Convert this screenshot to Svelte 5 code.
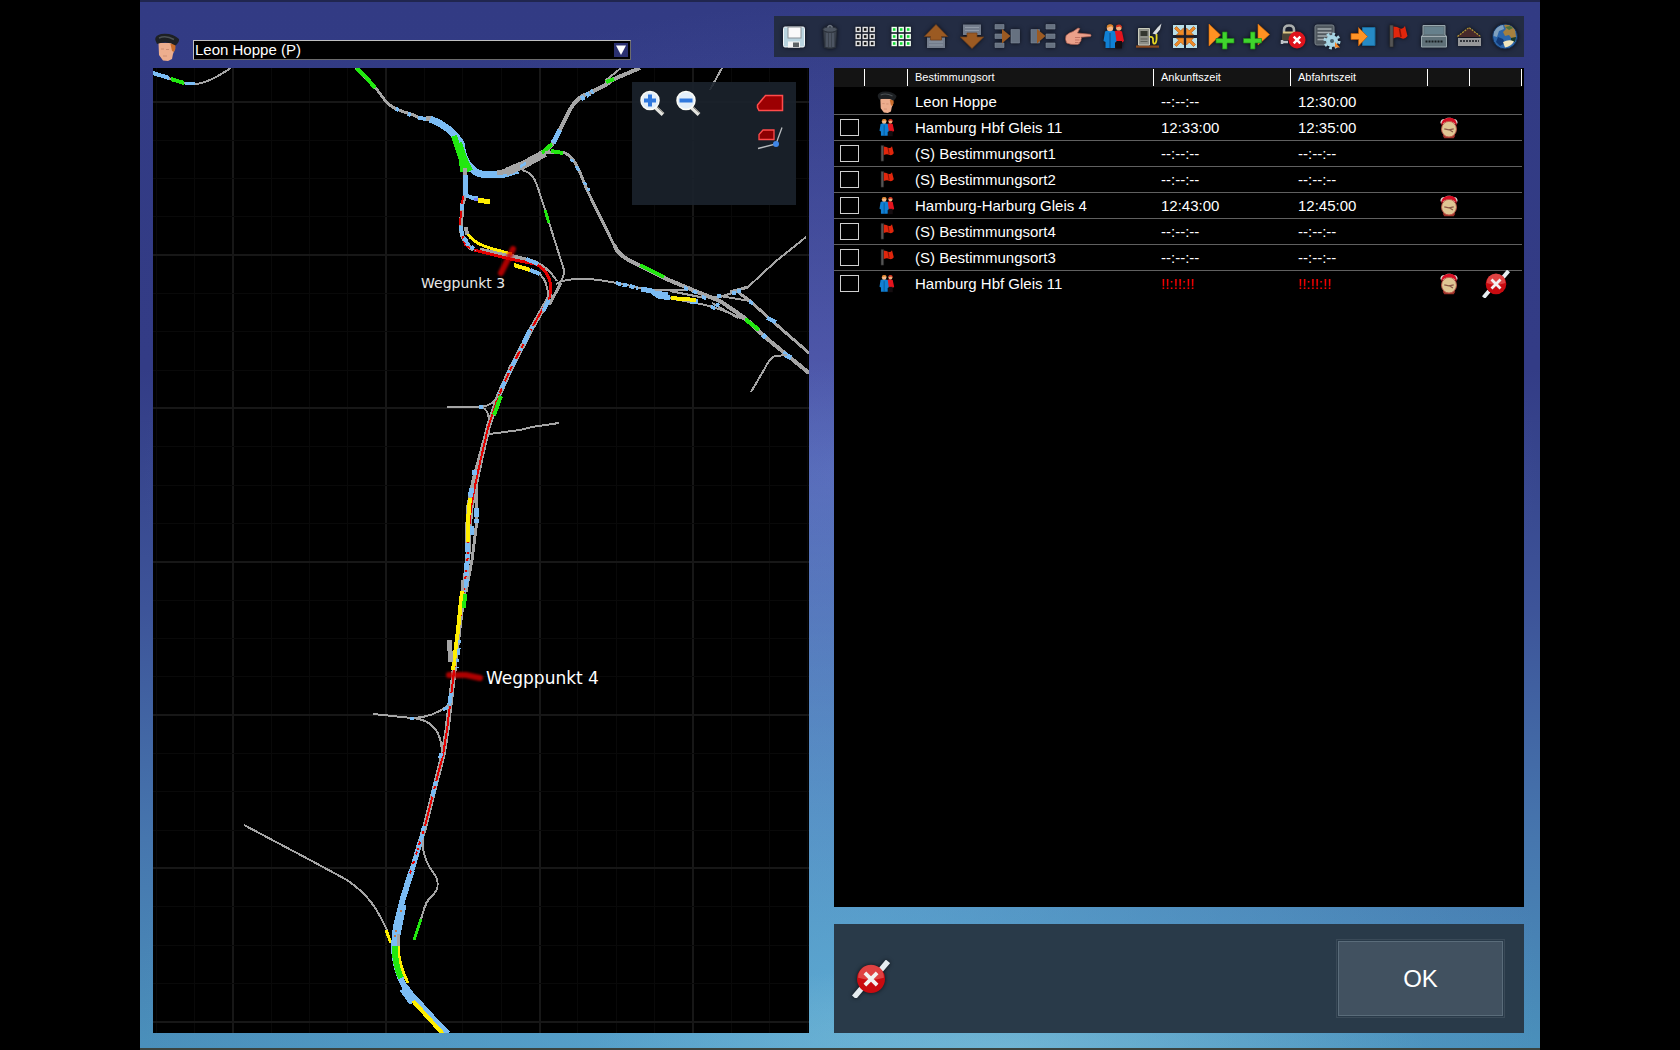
<script>
    const drivers = ['Leon Hoppe (P)'];
    let driver = $state(drivers[0]);

    const tools = [
        { icon: 'save', label: 'Speichern' },
        { icon: 'trash', label: 'Löschen' },
        { icon: 'grid', label: 'Alle abwählen' },
        { icon: 'gridOn', label: 'Alle auswählen' },
        { icon: 'up', label: 'Nach oben' },
        { icon: 'down', label: 'Nach unten' },
        { icon: 'merge', label: 'Verbinden' },
        { icon: 'split', label: 'Teilen' },
        { icon: 'hand', label: 'Zeigen' },
        { icon: 'people', label: 'Fahrgäste' },
        { icon: 'fuel', label: 'Tanken' },
        { icon: 'couple', label: 'Kuppeln' },
        { icon: 'addAfter', label: 'Danach einfügen' },
        { icon: 'addBefore', label: 'Davor einfügen' },
        { icon: 'unlock', label: 'Sperre aufheben' },
        { icon: 'orders', label: 'Anweisungen' },
        { icon: 'goto', label: 'Gehe zu' },
        { icon: 'flag', label: 'Wegpunkt' },
        { icon: 'platform', label: 'Bahnsteig' },
        { icon: 'station', label: 'Bahnhof' },
        { icon: 'globe', label: 'Welt' }
    ];

    const none = '--:--:--';
    let rows = $state([
        { icon: 'driver', name: 'Leon Hoppe', an: none, ab: '12:30:00', start: true },
        { icon: 'people', name: 'Hamburg Hbf Gleis 11', an: '12:33:00', ab: '12:35:00', clock: true },
        { icon: 'flag', name: '(S) Bestimmungsort1', an: none, ab: none },
        { icon: 'flag', name: '(S) Bestimmungsort2', an: none, ab: none },
        { icon: 'people', name: 'Hamburg-Harburg Gleis 4', an: '12:43:00', ab: '12:45:00', clock: true },
        { icon: 'flag', name: '(S) Bestimmungsort4', an: none, ab: none },
        { icon: 'flag', name: '(S) Bestimmungsort3', an: none, ab: none },
        { icon: 'people', name: 'Hamburg Hbf Gleis 11', an: '!!:!!:!!', ab: '!!:!!:!!', clock: true, broken: true }
    ]);

    const grey = '#a5a5a5';
    const blue = '#7bbcf4';
    const green = '#22e810';
    const yellow = '#ffee00';
    const red = '#e40000';

    // main line between the two junctions
    const mainLine = 'M549 298L533 326L511 368L498 397L488 428L481 458L475 486L471 508L469 530L468 555L465 582L461 612L457 645L453 680L450 705L447 730L443 755L436 782L425 826L412 870';
    const mainEnd = 'M412 870L403 898L396 926L394 945C394 965 400 982 412 998L432 1018L447 1034';

    const tracks = [
        // north west
        ['M153 73L171 79L184 83C198 86 208 83 231 68', grey, 2],
        ['M153 73L169 78', blue, 4],
        ['M171 79L184 83', green, 4],
        ['M185 83L195 84', blue, 3],
        ['M356 68L375 87L387 103Q395 110 411 114L420 118L440 121', grey, 3],
        ['M356 68L366 77L375 88', green, 4],
        ['M396 109L399 110M408 114L411 115M418 118L428 119', blue, 4],
        ['M426 118C442 120 455 132 461 142', grey, 5],
        ['M430 119C444 124 454 132 461 143C463 160 470 175 489 175L505 174L518 170', blue, 7],
        ['M497 173L508 171M520 168L526 165', grey, 5],
        ['M506 172L525 164L545 153', grey, 8],
        ['M520 167L526 163', blue, 3],
        ['M454 136L462 160L463 172M459 143L464 158L470 171', green, 6],
        // north east
        ['M545 153L553 143L561 128C571 105 577 98 585 95L604 86L614 79L640 68', grey, 4],
        ['M605 81L621 68', grey, 2],
        ['M553 143L560 130', blue, 5],
        ['M581 99L593 91', blue, 5, '4 2'],
        ['M606 82L614 79', green, 4],
        ['M542 153L552 144', green, 4],
        ['M545 152L563 152C578 158 581 178 588 192L614 245C620 258 630 260 640 266L664 278L700 293L720 301L745 318L765 337L809 373', grey, 3],
        ['M614 245C620 258 630 260 640 266L664 278L700 293L720 301L745 318L765 337L809 373', grey, 4],
        ['M551 151L563 153', green, 4],
        ['M571 159L573 162M576 166L579 171M584 182L586 185M588 188L589 191', blue, 3],
        ['M640 265L664 277', green, 4],
        ['M745 319L759 330', green, 4],
        ['M763 335L766 338M783 353L791 358', blue, 5],
        ['M522 170C533 173 535 180 538 188L546 213L564 270Q564 278 560 282', grey, 2],
        ['M545 210L549 223', green, 3],
        ['M722 68L710 90', grey, 2],
        // east yard
        ['M556 284L562 281C580 277 595 279 617 283L650 290L668 298L690 302C712 305 728 312 745 320', grey, 2],
        ['M650 290L685 290L690 288M670 291L700 297L720 297L738 291M712 303L738 318M720 296L750 301', grey, 2],
        ['M748 287L775 262L806 237', grey, 2],
        ['M730 292L748 287M738 292L750 301L770 319L809 353', grey, 3],
        ['M787 355L775 356Q770 358 765 368L751 392', grey, 2],
        ['M616 283L638 288', blue, 4, '5 2'],
        ['M641 289L652 291L658 296L670 298M655 293L668 295M690 302L698 301', blue, 5],
        ['M671 298L696 300', yellow, 4],
        ['M684 288L688 289M693 291L697 293M702 297L706 298M711 307L715 308M716 304L719 306M717 296L721 296M732 293L736 293M737 291L741 291M749 302L753 303M767 318L776 322', blue, 4],
        // south of the green junction
        ['M465 168L465 196L462 205L461 230Q462 242 473 250', grey, 4],
        ['M465 175L465 195', blue, 5],
        ['M463 196L462 204M461 211L460 225M462 232L465 245L470 248', red, 2],
        ['M462 204L462 210M461 226L462 236M464 238L467 242', blue, 4],
        ['M465 195L473 198L478 198', blue, 4],
        ['M474 199L479 200', '#6f7cf4', 3],
        ['M478 200L490 202', yellow, 5],
        ['M466 227L467 235', grey, 4],
        ['M468 234C474 245 492 249 512 254', yellow, 3],
        ['M480 249L510 256L535 262C549 270 553 284 550 298', grey, 3],
        ['M474 250L510 259L535 264C548 269 554 284 549 298', red, 3],
        ['M466 243L476 250', blue, 4, '4 2'],
        ['M512 255L528 259Q545 263 557 281', grey, 2],
        ['M526 259L538 264', blue, 4],
        ['M514 265L530 270', yellow, 4],
        ['M530 270L540 274', blue, 4],
        ['M540 274Q548 282 548 297', grey, 2],
        ['M561 283L549 305', grey, 3],
        // main line
        [mainLine, grey, 5],
        ['M484 440L473 480L468 505L466 540L468 560M476 480L477 520L472 560L466 592', grey, 3],
        [mainLine, red, 2],
        ['M533 326L511 368L499 394', blue, 4, '3 9 8 5'],
        ['M549 300L543 311M530 330L523 343', blue, 4],
        ['M475 470L474 475M472 488L470 497M476 508L476 526M472 526L471 535M467 543L467 563L466 582L463 592', blue, 5, '9 2 4 3'],
        ['M501 396L494 415', green, 4],
        ['M470 498L468 520L468 542', yellow, 4],
        ['M462 580L462 592', grey, 3],
        ['M462 591L458 630L453 670', yellow, 4],
        ['M465 594L464 608', green, 4],
        ['M449 640L451 662', grey, 5],
        ['M460 640L457 668', blue, 3, '3 5 7 4'],
        ['M451 693L449 706', blue, 4],
        ['M441 753L440 759M436 781L432 798M424 826L421 840L413 868', blue, 4, '5 3 8 2'],
        ['M420 842L412 870', blue, 5, '5 3'],
        // sidings
        ['M447 407L481 407Q492 406 498 396M481 407Q488 409 489 419', grey, 2],
        ['M479 407L483 407', blue, 4],
        ['M489 434L520 430L532 427L559 423', grey, 2],
        ['M373 714L412 718Q432 718 449 705M412 718Q441 720 442 752', grey, 2],
        ['M410 718L414 718M443 710L448 707', blue, 3],
        ['M423 840C422 858 430 868 435 875C440 884 438 890 432 896C424 902 424 912 421 919', grey, 2],
        ['M421 919L414 940', green, 3],
        ['M244 825L310 860L347 880C367 894 376 906 387 930', grey, 2],
        ['M386 930L391 943', yellow, 3],
        // south end
        [mainEnd, blue, 6],
        ['M403 905L396 940', blue, 7],
        ['M404 988L414 1002', blue, 10],
        ['M412 996L432 1018L448 1034', blue, 7],
        ['M398 934L398 948', grey, 3],
        ['M398 946Q399 966 408 983', yellow, 3],
        ['M395 946Q394 962 401 978', green, 6],
        ['M420 842L408 880', red, 2, '3 7'],
        ['M401 910L400 914M396 930L395 937', '#c07848', 2, '2 3'],
        ['M413 1001L443 1034', yellow, 4]
    ];

    // fine grid has four cells between two bright lines
    const step = 38.33;
    const gridX = Array.from({ length: 18 }, (_, i) => ({ at: 156.3 + i * step, strong: i % 4 === 2 }));
    const gridY = Array.from({ length: 25 }, (_, i) => ({ at: 101.8 + i * step, strong: i % 4 === 0 }));
</script>

{#snippet icon(name, size = 28)}
    <svg class="icon" width={size} height={size} viewBox="0 0 28 28" aria-hidden="true">
        {#if name === 'save'}
            <rect x="3.5" y="4" width="21" height="20" rx="1.5" fill="#b9d4df" stroke="#f2f6f8" />
            <rect x="8" y="4" width="13" height="11" fill="#fafafa" stroke="#8b9298" />
            <rect x="8" y="18.5" width="12" height="6" fill="#f4f4f4" />
            <rect x="13" y="19.5" width="6" height="4.5" fill="#5d6265" />
        {:else if name === 'trash'}
            <path d="M7.5 8h13l-1 16.5q-5 2-11 0z" fill="#3c434e" stroke="#2a303a" />
            <path d="M11 10v14M14 10v14M17 10v14" stroke="#596270" stroke-width="1.2" />
            <ellipse cx="14" cy="6.5" rx="7" ry="2.7" fill="#4d5561" stroke="#2b313b" />
            <path d="M11.5 4.5q2.5-4 5 0" fill="none" stroke="#6a727e" stroke-width="1.5" />
        {:else if name === 'grid' || name === 'gridOn'}
            {#each [5, 12, 19] as y}
                {#each [5, 12, 19] as x}
                    <rect x={x + 0.2} y={y - 0.5} width="4" height="4" fill={name === 'grid' ? '#111' : '#10d832'} stroke={name === 'grid' ? '#e4e4e4' : '#f4fff4'} stroke-width="1.4" />
                {/each}
            {/each}
        {:else if name === 'up'}
            <path d="M5 14.5h18V25H5z" fill="#737c8b" />
            <path d="M7 19h14M7 22h14" stroke="#9099a6" />
            <path d="M14 1.5L25.7 13.5H19.5V17H8.5V13.5H2.3z" fill="#9b5a22" stroke="#71401b" stroke-width="0.7" />
        {:else if name === 'down'}
            <path d="M5 1.5h18V12H5z" fill="#737c8b" />
            <path d="M7 4.5h14M7 7.5h14" stroke="#9099a6" />
            <path d="M9 10h10v4h6.7L14 25.5 2.3 14H9z" fill="#9b5a22" stroke="#71401b" stroke-width="0.7" />
        {:else if name === 'merge'}
            <path d="M2 1.5h9V6H2zM2 11h9v4.5H2zM2 20h9v4.5H2zM18 6.5h8.5V20H18z" fill="#667180" stroke="#7f8a99" stroke-width="0.6" />
            <path d="M9 6l8.5 7L9 20.5z" fill="#9b5a22" />
        {:else if name === 'split'}
            <path d="M17 1.5h9V6h-9zM17 11h9v4.5h-9zM17 20h9v4.5h-9zM2 6.5h8.5V20H2z" fill="#667180" stroke="#7f8a99" stroke-width="0.6" />
            <path d="M8 6l8.5 7L8 20.5z" fill="#9b5a22" />
        {:else if name === 'hand'}
            <path d="M2 12.5q3-3 7-4l5-3.500 1.800.6-2.300 4.400 13 1.300q1.200 1.200 0 2.200l-9.500.8q1.200 1 0 2.400.6 1.600-1.200 2.400.3 1.900-2.200 2.300-6.600.6-11-1.400-2-3.500-.6-7.500z" fill="#eba08a" stroke="#a55c50" stroke-width="0.7" />
            <path d="M11 14.5h5M11 17h4.5M11 19.5h3.5" stroke="#b9675a" stroke-width="0.8" />
        {:else if name === 'people'}
            <path d="M14 8.5q4-2 8 0l2 9.500-2 1.500h-8z" fill="#e5141e" />
            <path d="M15.5 18H22v7.5h-6.5z" fill="#150d10" />
            <circle cx="18.8" cy="4.8" r="2.8" fill="#f0ad7c" />
            <path d="M15.8 4.5q0-3 3.2-3 3.4.3 2.8 4l-1.8-2z" fill="#d3341f" />
            <path d="M5 8.5q5-2.500 10 0l1.500 10-1.500 1V25H5.500v-6L3.500 18z" fill="#1080d4" />
            <path d="M10 10v15" stroke="#084a86" />
            <circle cx="10" cy="5" r="3.2" fill="#f4b98a" />
            <path d="M6.8 5q-.3-3.700 3.400-3.700T13.300 5l-2-1.800z" fill="#d9822b" />
        {:else if name === 'fuel'}
            <path d="M1 22.5h23v2.200H1z" fill="#8a4a1e" />
            <path d="M3.5 5.5h11V22h-11z" fill="#8e9088" stroke="#c9cbbd" />
            <path d="M5.5 8h7v5h-7z" fill="#33372f" />
            <path d="M5.5 16h7M5.5 18.5h7" stroke="#5c5f58" />
            <path d="M14.5 14q4-1 3.500 3.500 0 4.500 2.500 2.500 1.500-1.500 1-9" fill="none" stroke="#e4d422" stroke-width="1.8" />
            <path d="M17.5 10.5l5-6 4-4-1.500 6-4 5z" fill="#d9dde0" />
        {:else if name === 'couple'}
            <path d="M2 2h11v10H2zM15 2h11v10H15zM2 15h11v10H2zM15 15h11v10H15z" fill="#b8dfe8" />
            <g fill="#f08a24" stroke="#a9510f" stroke-width="0.6">
                <path d="M12.5 12h-7l2.300-2.300L3.500 5.500l2-2 4.200 4.300L12.500 5z" />
                <path d="M15.5 12h7l-2.300-2.300 4.300-4.200-2-2-4.200 4.300L15.500 5z" />
                <path d="M12.5 15h-7l2.300 2.300-4.300 4.200 2 2 4.200-4.300 2.800 2.800z" />
                <path d="M15.5 15h7l-2.300 2.300 4.300 4.200-2 2-4.200-4.300-2.800 2.800z" />
            </g>
        {:else if name === 'addAfter'}
            <path d="M2 1v22l11.500-11z" fill="#ff9222" stroke="#d86c08" stroke-width="0.6" />
            <path d="M15.5 9H20v6.500h7V20h-7v6h-4.500v-6H9v-4.500h6.500z" fill="#3fd42d" stroke="#1f8c19" stroke-width="0.7" />
        {:else if name === 'addBefore'}
            <path d="M16 1v21l11.500-10.500z" fill="#ff9222" stroke="#d86c08" stroke-width="0.6" />
            <path d="M8.5 9H13v6.500h6.500V20H13v6H8.500v-6h-7v-4.500h7z" fill="#3fd42d" stroke="#1f8c19" stroke-width="0.7" />
        {:else if name === 'unlock'}
            <path d="M6 11V7q0-4.500 5-4.500T16 7v4" fill="none" stroke="#a9adad" stroke-width="2.6" />
            <path d="M4 10h14v7H4z" fill="#4a4437" />
            <path d="M5 9.5h12" stroke="#d9c583" stroke-width="2" />
            <path d="M3 19h7M4 17v4" stroke="#bcc2c6" stroke-width="2.5" />
            <circle cx="19" cy="17" r="8.5" fill="#e0141c" />
            <path d="M15.7 13.7l6.600 6.600M22.300 13.700l-6.600 6.600" stroke="#fff" stroke-width="2.5" />
        {:else if name === 'orders'}
            <rect x="2" y="2" width="19" height="20" rx="2" fill="#50585f" stroke="#79828a" />
            <path d="M4.5 6h14M4.500 9.500h14M4.500 13h14M4.500 16.500h14" stroke="#a3aaaf" stroke-width="1.3" />
            <circle cx="19" cy="18" r="6" fill="#a7d5e4" />
            <circle cx="19" cy="18" r="7" fill="none" stroke="#a7d5e4" stroke-width="3" stroke-dasharray="2.7 2.8" />
            <circle cx="19" cy="18" r="2" fill="#46616d" />
            <path d="M22 19l5 5.5h-5z" fill="#f58423" />
        {:else if name === 'goto'}
            <path d="M13.5 4.5H26v18H13.500z" fill="#268ac4" stroke="#196a9c" />
            <path d="M2 10.5h7.500v-6l9 9-9 9.500v-6.500H2z" fill="#ff9426" stroke="#b9590c" stroke-width="0.7" />
        {:else if name === 'flag'}
            <path d="M5.7 2h3.600v22H5.700z" fill="#555" stroke="#262626" stroke-width="0.6" />
            <path d="M9.5 3.5q4 .2 6.500 2 3 1 5-2.500l2.500 10q-3 4-6.500 2-3.500-1.500-7.500.5z" fill="#e0260c" />
            <path d="M15.5 5.5l1.500 8.500" stroke="#8d1206" stroke-width="1.5" />
        {:else if name === 'platform'}
            <path d="M3 2.5h22V12l1.500 1v11h-25V13L3 12z" fill="#5f7078" stroke="#98a7ad" />
            <path d="M4.5 4h19v7h-19z" fill="#66808c" />
            <path d="M2 13.5h24" stroke="#a2adb2" />
            <path d="M5.5 18.5h17" stroke="#171d20" stroke-width="2.2" stroke-dasharray="2 1" />
        {:else if name === 'station'}
            <path d="M4 14l-1.500-1L14 4.500 25.500 13 24 14z" fill="#47292a" />
            <path d="M2.5 13.5l11.500-9 11.500 9" fill="none" stroke="#b59a35" stroke-width="1.2" stroke-dasharray="2 1" />
            <path d="M3 15h23v8H3z" fill="#969799" />
            <path d="M5 18h19" stroke="#33363c" stroke-width="1.8" stroke-dasharray="2 1" />
        {:else if name === 'globe'}
            <circle cx="14" cy="13.5" r="12.5" fill="#2c66ab" stroke="#142a4c" />
            <path d="M3 9q3-6 9-7l1 4-5 2-2 6-3.500-1z" fill="#7fa0be" />
            <path d="M13 2q7-1 11 5l1 7-4 2-3-4-4 1-2-4 3-3z" fill="#a5803f" />
            <path d="M7 14l5 2 2 4-5 3-4-4z" fill="#123a78" />
            <path d="M20 15l5-1-1 5-4-1z" fill="#173a2a" />
            <path d="M12 19q6-3 11-.5-3 5-9 6z" fill="#f2e6bd" />
            <path d="M14 4l5-1 3 2-4 2z" fill="#4a6f3e" />
        {:else if name === 'driver'}
            <path d="M5.5 10h15.500l1 6-2 5-1 5-4 2-5-.5-4-5.500z" fill="#edae8e" />
            <path d="M17.500 11h5q.5 5-1.500 8l-2-1z" fill="#c96d2c" />
            <path d="M8 16h3M13 16.500h3M10 23h4" stroke="#cd8e72" />
            <path d="M2.500 7.500Q1 3 8 1q11-1.500 18 5 .5 3-3.500 6.500-6-4-15-2.500L4 11z" fill="#1d2023" />
            <path d="M6 5q7-3 15 1.500" stroke="#4b5154" stroke-width="1.5" fill="none" />
        {:else if name === 'clock'}
            <path d="M3 8q0-6 6-5.500l3-1.500h4l3 1.500q6-.5 6 5.500l-3 1H6z" fill="#dedad5" />
            <path d="M4 11q0-9.500 10-10t10 10l-4-4H8z" fill="#d50f24" />
            <path d="M6 24l3-3h10l3 3-2 3H8z" fill="#9d3028" />
            <ellipse cx="14" cy="15.5" rx="9.5" ry="10" fill="#dfc694" stroke="#bd5648" stroke-width="1.2" />
            <path d="M8 15l6 1.500 6-1.500M14 16l5 3" stroke="#8a5746" stroke-width="1.6" fill="none" />
        {:else if name === 'broken'}
            <path d="M1.5 27.5L7 21M21 7.500L26.500 1" stroke="#e6edf0" stroke-width="4" />
            <circle cx="14" cy="14" r="10.3" fill="#c90b10" />
            <path d="M4.5 13a9.500 9.500 0 0 1 19 0q-9.500 3-19 0z" fill="#e85a58" opacity="0.7" />
            <path d="M9.5 9.5l9 9M18.500 9.500l-9 9" stroke="#f2f2f2" stroke-width="2.8" />
        {:else if name === 'zoomIn' || name === 'zoomOut'}
            <path d="M17 18l8 7.5" stroke="#e4e4df" stroke-width="4" />
            <path d="M18.5 17.5l7 6.500" stroke="#77736d" stroke-width="1" />
            <circle cx="12" cy="11.5" r="9" fill="#e2eefa" stroke="#fbfbf6" stroke-width="1.5" />
            <path d={name === 'zoomIn' ? 'M10 5.5h4v4h4v4h-4v4h-4v-4H6v-4h4z' : 'M5.5 9.5h13v4h-13z'} fill="#3078dd" />
        {:else if name === 'loco'}
            <path d="M1.500 18.500V16l8-9.500h17v15H3z" fill="#9c0002" stroke="#ff4b4b" stroke-width="1.5" />
        {:else if name === 'locoTrack'}
            <path d="M3 13.5v-4l4-4.500h11v9.500H3z" fill="#8c0002" stroke="#ff4b4b" stroke-width="1.3" />
            <path d="M2 23.5l18-4.500L26 2.500" fill="none" stroke="#b9bcbf" stroke-width="1.3" />
            <circle cx="20" cy="19" r="3" fill="#3f86e6" />
        {/if}
    </svg>
{/snippet}

<main class="screen">
    <div class="stage">
        <header>
            <div class="driver">
                {@render icon('driver')}
                <div class="combo">
                    <select aria-label="Fahrer" bind:value={driver}>
                        {#each drivers as d}
                            <option>{d}</option>
                        {/each}
                    </select>
                    <svg class="arrow" viewBox="0 0 14 14" aria-hidden="true"><path d="M2 2.5h10L7 12z" fill="#fff" /></svg>
                </div>
            </div>
            <div class="toolbar">
                {#each tools as tool}
                    <button type="button" aria-label={tool.label}>{@render icon(tool.icon)}</button>
                {/each}
            </div>
        </header>

        <div class="columns">
            <section class="map">
                <svg viewBox="153 68 656 965" preserveAspectRatio="xMidYMid slice" role="img" aria-label="Streckenkarte">
                    <g shape-rendering="crispEdges">
                        {#each gridX as line}
                            <path d="M{line.at} 68V1033" stroke={line.strong ? '#171717' : '#090909'} stroke-width={line.strong ? 2 : 1} />
                        {/each}
                        {#each gridY as line}
                            <path d="M153 {line.at}H809" stroke={line.strong ? '#171717' : '#090909'} stroke-width={line.strong ? 2 : 1} />
                        {/each}
                        {#each tracks as [d, color, width, dash]}
                            <path {d} fill="none" stroke={color} stroke-width={width} stroke-dasharray={dash} />
                        {/each}
                    </g>
                    <g class="markers">
                        <path d="M513 249L501 273" />
                        <path d="M449 675L466 675L480 678" />
                    </g>
                    <text x="421" y="288" font-size="14">Wegpunkt 3</text>
                    <text x="486" y="684" font-size="17" class="near">Wegppunkt 4</text>
                </svg>
                <div class="overlay">
                    <button type="button" aria-label="Vergrößern">{@render icon('zoomIn')}</button>
                    <button type="button" aria-label="Verkleinern">{@render icon('zoomOut')}</button>
                    <div class="trains">
                        <button type="button" aria-label="Zug anzeigen">{@render icon('loco')}</button>
                        <button type="button" aria-label="Weiche anzeigen">{@render icon('locoTrack')}</button>
                    </div>
                </div>
            </section>

            <section class="side">
                <div class="orders">
                    <table>
                        <colgroup>
                            <col class="c-check" />
                            <col class="c-type" />
                            <col />
                            <col class="c-time" />
                            <col class="c-time" />
                            <col class="c-clock" />
                            <col class="c-state" />
                        </colgroup>
                        <thead>
                            <tr>
                                <th></th>
                                <th></th>
                                <th>Bestimmungsort</th>
                                <th>Ankunftszeit</th>
                                <th>Abfahrtszeit</th>
                                <th></th>
                                <th></th>
                            </tr>
                        </thead>
                        <tbody>
                            {#each rows as row}
                                <tr>
                                    <td class="mid">
                                        {#if !row.start}
                                            <input type="checkbox" aria-label={row.name} bind:checked={row.checked} />
                                        {/if}
                                    </td>
                                    <td class="mid">{@render icon(row.icon, row.icon === 'driver' ? 22 : 20)}</td>
                                    <td>{row.name}</td>
                                    <td class:late={row.broken}>{row.an}</td>
                                    <td class:late={row.broken}>{row.ab}</td>
                                    <td class="mid">{#if row.clock}{@render icon('clock', 22)}{/if}</td>
                                    <td class="mid">{#if row.broken}{@render icon('broken')}{/if}</td>
                                </tr>
                            {/each}
                        </tbody>
                    </table>
                </div>
                <footer>
                    {@render icon('broken', 38)}
                    <button type="button" class="ok">OK</button>
                </footer>
            </section>
        </div>
    </div>
</main>

<style>
    :global(body) {
        background: #000;
    }

    .screen {
        display: flex;
        justify-content: center;
        min-height: 100vh;
        background: #000;
        color: #fff;
        font-family: 'Liberation Sans', Arial, sans-serif;
        font-size: 15px;
    }

    .stage {
        display: flex;
        flex-direction: column;
        box-sizing: border-box;
        width: 100%;
        max-width: calc(100vh * 4 / 3);
        padding: 0 16px 15px 13px;
        border-top: 2px solid #20264f;
        border-bottom: 2px solid #3b4440;
        background:
            radial-gradient(ellipse 30% 8% at 62% 100%, rgba(150, 210, 225, 0.4), rgba(150, 210, 225, 0) 100%),
            radial-gradient(ellipse 50% 60% at 50% 94%, rgba(100, 180, 220, 0.65), rgba(100, 180, 220, 0) 100%),
            radial-gradient(ellipse 50% 45% at 50% 45%, rgba(120, 130, 225, 0.5), rgba(120, 130, 225, 0) 100%),
            linear-gradient(#323b84, #333c86 35%, #3d5499 58%, #4676ae 80%, #4a90bb);
    }

    button {
        display: block;
        padding: 0;
        border: 0;
        background: none;
        cursor: pointer;
    }

    .icon {
        display: block;
        flex: none;
    }

    /* top row */
    header {
        display: flex;
        justify-content: space-between;
        align-items: flex-end;
        box-sizing: border-box;
        height: 66px;
        padding: 14px 0 5px;
    }

    .driver {
        display: flex;
        align-items: flex-end;
        gap: 12px;
        width: 478px;
    }

    .combo {
        position: relative;
        flex: 1;
        margin-bottom: 3px;
    }

    .driver > .icon {
        margin-bottom: 2px;
    }

    select {
        display: block;
        appearance: none;
        box-sizing: border-box;
        width: 100%;
        height: 20px;
        padding: 0 20px 0 1px;
        border: 1px solid #6c6c6c;
        border-top-color: #c0c0c0;
        border-left-color: #c0c0c0;
        border-radius: 0;
        background: #000;
        color: #fff;
        font: inherit;
        line-height: 18px;
    }

    .arrow {
        position: absolute;
        top: 3px;
        right: 3px;
        width: 14px;
        height: 14px;
        background: #2a3070;
        pointer-events: none;
    }

    .toolbar {
        display: flex;
        justify-content: space-between;
        align-items: center;
        align-self: flex-start;
        box-sizing: border-box;
        width: 750px;
        height: 41px;
        padding: 0 5px 0 6px;
        background: #232c43;
    }

    .toolbar .icon,
    footer .icon {
        filter: drop-shadow(0 0 2px rgba(0, 0, 0, 0.7));
    }

    .columns {
        display: grid;
        grid-template-columns: 656fr 690fr;
        gap: 25px;
        flex: 1;
        min-height: 0;
    }

    /* map */
    .map {
        position: relative;
        min-height: 0;
        background: #000;
        overflow: hidden;
    }

    .map > svg {
        display: block;
        width: 100%;
        height: 100%;
    }

    .map text {
        fill: #e8e8e8;
        font-family: 'DejaVu Sans', sans-serif;
    }

    .map .near {
        fill: #fff;
    }

    .markers {
        fill: none;
        stroke: #d80000;
        stroke-width: 6px;
        stroke-linecap: round;
        opacity: 0.8;
        filter: blur(1px);
    }

    .overlay {
        position: absolute;
        top: 14px;
        right: 13px;
        display: flex;
        align-items: flex-start;
        gap: 8px;
        box-sizing: border-box;
        width: 164px;
        height: 123px;
        padding: 7px 12px 7px 6px;
        background: rgba(27, 34, 44, 0.9);
    }

    .trains {
        display: flex;
        flex-direction: column;
        gap: 8px;
        margin-left: auto;
    }

    /* timetable */
    .side {
        display: flex;
        flex-direction: column;
        gap: 17px;
        min-width: 0;
    }

    .orders {
        flex: 1;
        padding-right: 2px;
        background: #000;
    }

    table {
        width: 100%;
        table-layout: fixed;
        border-collapse: separate;
        border-spacing: 0;
    }

    .c-check {
        width: 31px;
    }

    .c-type {
        width: 43px;
    }

    .c-time {
        width: 137px;
    }

    .c-clock {
        width: 42px;
    }

    .c-state {
        width: 52px;
    }

    th {
        height: 19px;
        padding: 0 0 0 7px;
        border-bottom: 2px solid #000;
        background: linear-gradient(#fff, #fff) right 1px / 1px 17px no-repeat #141414;
        font-size: 11px;
        font-weight: normal;
        line-height: 19px;
        text-align: left;
    }

    td {
        height: 25px;
        padding: 0 0 0 7px;
        border-bottom: 1px solid #606060;
        line-height: 25px;
        white-space: nowrap;
    }

    tr:last-child td {
        border-bottom-color: transparent;
    }

    .mid {
        padding: 0;
    }

    .mid .icon {
        margin: -2px auto;
    }

    .late {
        color: #ff0000;
    }

    input[type='checkbox'] {
        display: block;
        appearance: none;
        box-sizing: border-box;
        width: 19px;
        height: 17px;
        margin: 0 auto;
        border: 1px solid #d0d0d0;
        background: #000;
    }

    input[type='checkbox']:checked {
        background: linear-gradient(#fff, #fff) center / 9px 9px no-repeat #000;
    }

    /* bottom bar */
    footer {
        display: flex;
        justify-content: space-between;
        align-items: center;
        box-sizing: border-box;
        height: 109px;
        padding: 0 21px 0 18px;
        background: #293a49;
    }

    .ok {
        box-sizing: border-box;
        width: 165px;
        height: 75px;
        border: 1px solid #5a6c7a;
        outline: 1px solid #3a4a58;
        outline-offset: 1px;
        background: #415160;
        color: #fff;
        font-family: inherit;
        font-size: 24px;
    }
</style>
